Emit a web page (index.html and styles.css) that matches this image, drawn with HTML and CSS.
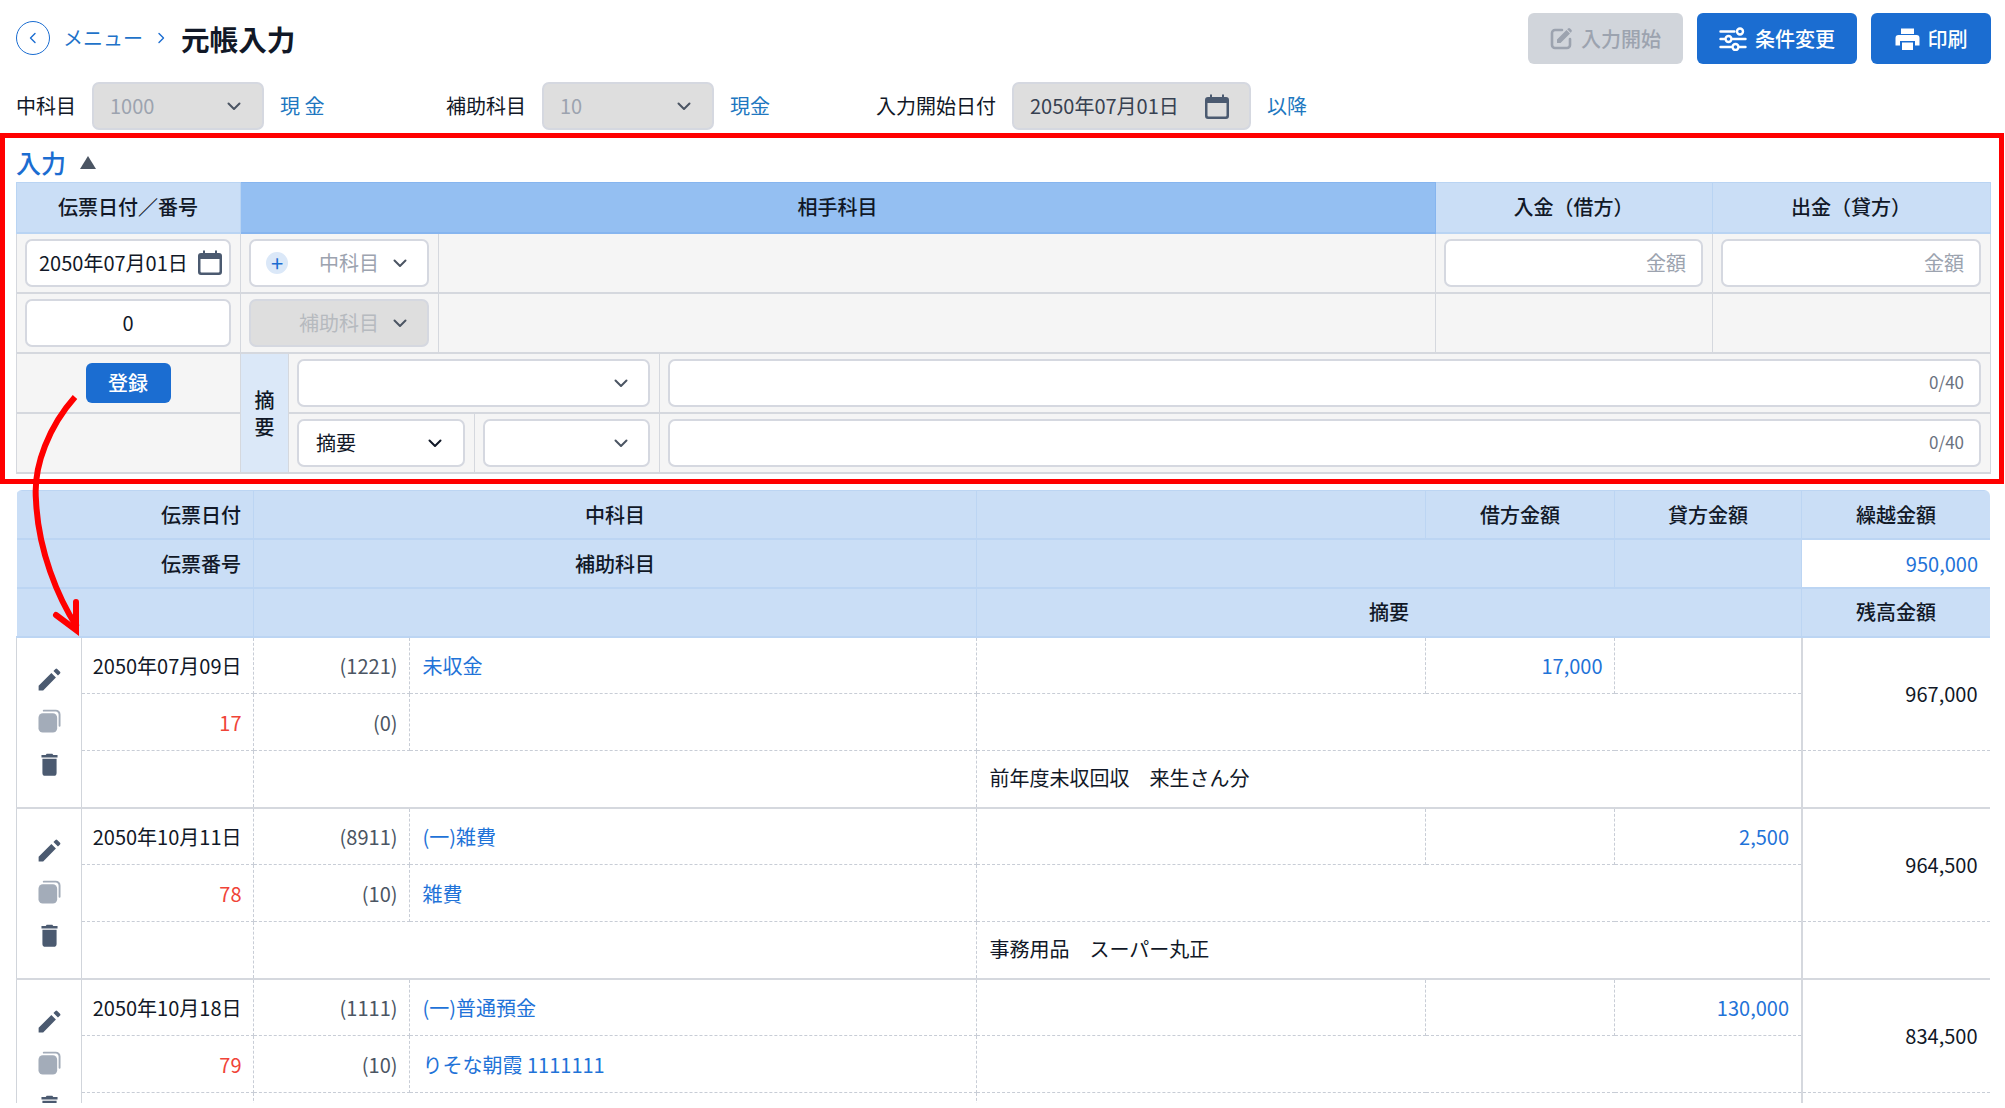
FILE: index.html
```html
<!DOCTYPE html>
<html lang="ja">

<head>
    <meta charset="UTF-8">
    <meta name="viewport" content="width=device-width, initial-scale=1.0">
    <title>元帳入力</title>
    <link rel="stylesheet" href="styles.css">
</head>

<body>
    <!-- shared icons -->
    <svg class="icon-defs" aria-hidden="true">
        <symbol id="i-chevron" viewBox="0 0 16 16">
            <path d="M2.5 5.5 8 11l5.500-5.500" fill="none" stroke="currentColor" stroke-width="2" stroke-linecap="round" stroke-linejoin="round" />
        </symbol>
        <symbol id="i-calendar" viewBox="0 0 24 25">
            <path d="M5 0.500h2v2.500h10V0.500h2V3h2a3 3 0 0 1 3 3v16a3 3 0 0 1-3 3H3a3 3 0 0 1-3-3V6a3 3 0 0 1 3-3h2zM2.500 9v12.500a1 1 0 0 0 1 1h17a1 1 0 0 0 1-1V9z" fill="currentColor" />
        </symbol>
        <symbol id="i-pencil" viewBox="0 0 24 24">
            <path d="M3 17.250V21h3.750L17.300 10.400l-3.750-3.750zM20.710 7.040a1 1 0 0 0 0-1.410l-2.340-2.340a1 1 0 0 0-1.410 0l-1.700 1.700 3.750 3.750z" fill="currentColor" />
        </symbol>
        <symbol id="i-copy" viewBox="0 0 24 24">
            <rect x="0.500" y="4" width="19.500" height="20" rx="4.500" fill="currentColor" />
            <path d="M6 1.200h12.500a4 4 0 0 1 4 4V17" fill="none" stroke="currentColor" stroke-width="2" stroke-linecap="round" />
        </symbol>
        <symbol id="i-trash" viewBox="0 0 18 24">
            <path d="M6 0.500h6l1 1.500h4.500v2.500H0.500V2H5zM1.500 6h15v15a3 3 0 0 1-3 3h-9a3 3 0 0 1-3-3z" fill="currentColor" />
        </symbol>
    </svg>

    <div class="page">
        <header class="topbar">
            <nav class="crumbs">
                <a class="back-btn" href="#">
                    <svg width="10" height="12" viewBox="0 0 10 12"><path d="M7 1.500 2.500 6 7 10.500" fill="none" stroke="currentColor" stroke-width="1.400" stroke-linecap="round" stroke-linejoin="round" /></svg>
                </a>
                <a class="crumb-link" href="#">メニュー</a>
                <svg class="crumb-sep" width="10" height="12" viewBox="0 0 10 12"><path d="M3 1.500 7.500 6 3 10.500" fill="none" stroke="currentColor" stroke-width="1.400" stroke-linecap="round" stroke-linejoin="round" /></svg>
                <h1 class="page-title">元帳入力</h1>
            </nav>
            <div class="actions">
                <button class="btn btn-off">
                    <svg width="23" height="23" viewBox="0 0 23 23">
                        <path d="M12 3H5a3 3 0 0 0-3 3v12a3 3 0 0 0 3 3h12a3 3 0 0 0 3-3v-6" fill="none" stroke="currentColor" stroke-width="2.600" stroke-linecap="round" />
                        <path d="M7 16v-3.500L16.500 3 20 6.500 10.500 16zM18 1.500a1.500 1.500 0 0 1 2.100 0l1.300 1.300a1.500 1.500 0 0 1 0 2.100l-.8.8L17.200 2.300z" fill="currentColor" />
                    </svg>
                    入力開始
                </button>
                <button class="btn btn-cond">
                    <svg width="28" height="24" viewBox="0 0 28 24" fill="none" stroke="currentColor" stroke-width="2.400" stroke-linecap="round">
                        <path d="M1.500 4.500h14M1.500 12h3.500M14 12h12.500M1.500 20h10.500M21 20h5.500" />
                        <circle cx="21" cy="4.500" r="3" /><circle cx="9.500" cy="12" r="3" /><circle cx="16.500" cy="20" r="3" />
                    </svg>
                    条件変更
                </button>
                <button class="btn btn-print">
                    <svg width="25" height="24" viewBox="0 0 25 24">
                        <path d="M6 1.500h13V7H6zM3.500 8h18a3 3 0 0 1 3 3v7.500H20V14H5v4.500H0.500V11a3 3 0 0 1 3-3zM7 15.500h11V23H7z" fill="currentColor" />
                    </svg>
                    印刷
                </button>
            </div>
        </header>

        <div class="filters">
            <div class="filter-group">
                <label>中科目</label>
                <div class="field select off filter-select"><span>1000</span><svg class="chev"><use href="#i-chevron" /></svg></div>
                <a class="filter-link" href="#">現 金</a>
            </div>
            <div class="filter-group">
                <label>補助科目</label>
                <div class="field select off filter-select"><span>10</span><svg class="chev"><use href="#i-chevron" /></svg></div>
                <a class="filter-link" href="#">現金</a>
            </div>
            <div class="filter-group">
                <label>入力開始日付</label>
                <div class="field select off filter-date"><span>2050年07月01日</span><svg class="cal"><use href="#i-calendar" /></svg></div>
                <a class="filter-link" href="#">以降</a>
            </div>
        </div>

        <!-- Entry form -->
        <section class="entry">
            <h2 class="entry-title">入力 <span class="entry-caret"></span></h2>
            <table class="entry-table">
                <colgroup>
                    <col class="c-a"><col class="c-b"><col class="c-c"><col class="c-d"><col class="c-e"><col class="c-f"><col class="c-g"><col class="c-h">
                </colgroup>
                <tr class="entry-head">
                    <th>伝票日付／番号</th>
                    <th class="strong" colspan="5">相手科目</th>
                    <th>入金（借方）</th>
                    <th>出金（貸方）</th>
                </tr>
                <tr>
                    <td>
                        <div class="field select date-input"><span>2050年07月01日</span><svg class="cal"><use href="#i-calendar" /></svg></div>
                    </td>
                    <td colspan="2">
                        <div class="field select picker">
                            <span class="plus">+</span><span class="ph">中科目</span><svg class="chev"><use href="#i-chevron" /></svg>
                        </div>
                    </td>
                    <td colspan="3"></td>
                    <td><div class="field amount">金額</div></td>
                    <td><div class="field amount">金額</div></td>
                </tr>
                <tr>
                    <td><div class="field center">0</div></td>
                    <td colspan="2">
                        <div class="field select picker off">
                            <span class="ph ph-off">補助科目</span><svg class="chev"><use href="#i-chevron" /></svg>
                        </div>
                    </td>
                    <td colspan="3"></td>
                    <td></td>
                    <td></td>
                </tr>
                <tr>
                    <td class="submit-cell"><button class="btn btn-small">登録</button></td>
                    <th class="memo-head" rowspan="2">摘<br>要</th>
                    <td colspan="3"><div class="field select plain"><svg class="chev"><use href="#i-chevron" /></svg></div></td>
                    <td colspan="3"><div class="field counter">0/40</div></td>
                </tr>
                <tr>
                    <td></td>
                    <td colspan="2">
                        <div class="field select memo-type"><span>摘要</span><svg class="chev dark"><use href="#i-chevron" /></svg></div>
                    </td>
                    <td><div class="field select plain"><svg class="chev"><use href="#i-chevron" /></svg></div></td>
                    <td colspan="3"><div class="field counter">0/40</div></td>
                </tr>
            </table>
        </section>

        <!-- Ledger -->
        <div class="ledger-wrap">
            <table class="ledger">
                <colgroup>
                    <col class="l-a"><col class="l-b"><col class="l-c"><col class="l-d"><col class="l-e"><col class="l-f"><col class="l-g"><col class="l-h">
                </colgroup>
                <thead>
                    <tr class="head-first">
                        <th class="right" colspan="2">伝票日付</th>
                        <th colspan="2">中科目</th>
                        <th></th>
                        <th>借方金額</th>
                        <th>貸方金額</th>
                        <th>繰越金額</th>
                    </tr>
                    <tr class="head-second">
                        <th class="right" colspan="2">伝票番号</th>
                        <th colspan="2">補助科目</th>
                        <th colspan="2"></th>
                        <th></th>
                        <td class="carry">950,000</td>
                    </tr>
                    <tr>
                        <th colspan="2"></th>
                        <th colspan="2"></th>
                        <th colspan="3">摘要</th>
                        <th>残高金額</th>
                    </tr>
                </thead>
                <tbody>
                    <tr class="group-start">
                        <td class="tools" rowspan="3">
                            <div class="tool-stack">
                                <svg class="tool"><use href="#i-pencil" /></svg>
                                <svg class="tool-copy"><use href="#i-copy" /></svg>
                                <svg class="tool-trash"><use href="#i-trash" /></svg>
                            </div>
                        </td>
                        <td class="right date">2050年07月09日</td>
                        <td class="right code">(1221)</td>
                        <td class="link">未収金</td>
                        <td></td>
                        <td class="right link">17,000</td>
                        <td></td>
                        <td class="right balance" rowspan="2">967,000</td>
                    </tr>
                    <tr>
                        <td class="right red">17</td>
                        <td class="right code">(0)</td>
                        <td></td>
                        <td colspan="3"></td>
                    </tr>
                    <tr class="memo-row">
                        <td></td>
                        <td colspan="2"></td>
                        <td colspan="3">前年度未収回収　来生さん分</td>
                        <td class="balance-foot"></td>
                    </tr>

                    <tr class="group-start">
                        <td class="tools" rowspan="3">
                            <div class="tool-stack">
                                <svg class="tool"><use href="#i-pencil" /></svg>
                                <svg class="tool-copy"><use href="#i-copy" /></svg>
                                <svg class="tool-trash"><use href="#i-trash" /></svg>
                            </div>
                        </td>
                        <td class="right date">2050年10月11日</td>
                        <td class="right code">(8911)</td>
                        <td class="link">(一)雑費</td>
                        <td></td>
                        <td></td>
                        <td class="right link">2,500</td>
                        <td class="right balance" rowspan="2">964,500</td>
                    </tr>
                    <tr>
                        <td class="right red">78</td>
                        <td class="right code">(10)</td>
                        <td class="link">雑費</td>
                        <td colspan="3"></td>
                    </tr>
                    <tr class="memo-row">
                        <td></td>
                        <td colspan="2"></td>
                        <td colspan="3">事務用品　スーパー丸正</td>
                        <td class="balance-foot"></td>
                    </tr>

                    <tr class="group-start">
                        <td class="tools" rowspan="3">
                            <div class="tool-stack">
                                <svg class="tool"><use href="#i-pencil" /></svg>
                                <svg class="tool-copy"><use href="#i-copy" /></svg>
                                <svg class="tool-trash"><use href="#i-trash" /></svg>
                            </div>
                        </td>
                        <td class="right date">2050年10月18日</td>
                        <td class="right code">(1111)</td>
                        <td class="link">(一)普通預金</td>
                        <td></td>
                        <td></td>
                        <td class="right link">130,000</td>
                        <td class="right balance" rowspan="2">834,500</td>
                    </tr>
                    <tr>
                        <td class="right red">79</td>
                        <td class="right code">(10)</td>
                        <td class="link">りそな朝霞 1111111</td>
                        <td colspan="3"></td>
                    </tr>
                    <tr class="memo-row">
                        <td></td>
                        <td colspan="2"></td>
                        <td colspan="3"></td>
                        <td class="balance-foot"></td>
                    </tr>
                </tbody>
            </table>
        </div>

        <!-- Annotation arrow drawn over the page -->
        <svg class="arrow" width="100" height="660" viewBox="0 0 100 660">
            <path d="M75 397C50 425 33 465 36 500C38 550 58 598 77 627" fill="none" stroke="#f00" stroke-width="6" />
            <path d="M76 602V630L56 615" fill="none" stroke="#f00" stroke-width="6" stroke-linecap="round" />
        </svg>
    </div>
</body>

</html>
```

FILE: styles.css
```css
/* Reset */
* {
    margin: 0;
    padding: 0;
    box-sizing: border-box;
}

body {
    background: #fff;
    color: #111827;
    font-family: "Noto Sans CJK JP", "Noto Sans", sans-serif;
    font-size: 20px;
    line-height: 1.3;
    overflow: hidden;
}

a {
    text-decoration: none;
}

.icon-defs {
    display: none;
}

.page {
    position: relative;
    width: 2005px;
    height: 1108px;
    overflow: hidden;
}

/* Top bar */
.topbar {
    display: flex;
    justify-content: space-between;
    align-items: center;
    padding: 13px 14px 18px 16px;
}

.crumbs {
    display: flex;
    align-items: center;
}

.back-btn {
    width: 34px;
    height: 34px;
    border: 1.500px solid #1b6dd1;
    border-radius: 50%;
    color: #1b6dd1;
    display: flex;
    align-items: center;
    justify-content: center;
    margin-right: 13px;
}

.crumb-link {
    color: #1f73c9;
    width: 81px;
}

.crumb-sep {
    color: #1b6dd1;
    margin: 0 15px 0 12px;
}

.page-title {
    font-size: 28.600px;
    font-weight: 700;
}

.actions {
    display: flex;
    gap: 14px;
}

.btn {
    height: 51px;
    display: flex;
    align-items: center;
    justify-content: center;
    gap: 8px;
    width: 155px;
    border: none;
    border-radius: 6px;
    background: #1b6dd1;
    color: #fff;
    font: inherit;
    font-weight: 500;
}

.btn-off {
    background: #d1d5db;
    color: #9ca3af;
}

.btn-cond {
    width: 160px;
}

.btn-print {
    width: 120px;
}

.btn-small {
    height: 40px;
    width: 85px;
    margin: 0 auto;
}

/* Filter row */
.filters {
    display: flex;
    height: 48px;
    padding-left: 16px;
    margin-bottom: 3px;
}

.filter-group {
    display: flex;
    align-items: center;
    gap: 16px;
    width: 430px;
}

.filter-group:last-child {
    width: auto;
}

.filter-link {
    color: #2077c0;
}

.filter-select {
    width: 172px;
    color: #9ca3af;
    padding-left: 15px;
}

.filter-date {
    width: 239px;
    color: #374151;
    padding-left: 20px;
    padding-right: 20px;
}

/* Form fields */
.field {
    height: 48px;
    display: flex;
    align-items: center;
    background: #fff;
    border: 2px solid #d5d8e0;
    border-radius: 7px;
    white-space: nowrap;
}

.field.off {
    background: #dedede;
}

.select {
    justify-content: space-between;
    padding: 0 20px 0 16px;
}

.chev {
    width: 16px;
    height: 16px;
    flex: none;
    color: #4b5563;
}

.chev.dark {
    color: #111827;
}

.cal {
    width: 24px;
    height: 25px;
    flex: none;
    color: #4b5a70;
}

.date-input {
    padding: 0 7px 0 12px;
}

.picker {
    justify-content: flex-end;
    gap: 13px;
    padding-right: 19px;
    position: relative;
}

.plus {
    position: absolute;
    left: 15px;
    top: 11px;
    width: 22px;
    height: 22px;
    border-radius: 50%;
    background: #dbe8f8;
    color: #1b6dd1;
    font-size: 22px;
    line-height: 20px;
    text-align: center;
}

.ph {
    color: #9ca3af;
}

.ph-off {
    color: #b6babf;
}

.plain {
    justify-content: flex-end;
    padding-right: 19px;
}

.memo-type {
    padding-left: 17px;
}

.center {
    justify-content: center;
}

.amount {
    justify-content: flex-end;
    padding-right: 15px;
    color: #9ca3af;
}

.counter {
    justify-content: flex-end;
    padding-right: 15px;
    color: #6b7280;
    font-size: 17px;
}

/* Entry section */
.entry {
    width: 2004px;
    height: 351px;
    border: 5px solid #f00;
    padding-left: 11px;
}

.entry-title {
    height: 44px;
    padding-top: 5px;
    display: flex;
    align-items: center;
    color: #1b6dd1;
    font-size: 25px;
    font-weight: 500;
    gap: 14px;
}

.entry-caret {
    width: 0;
    height: 0;
    border-left: 8px solid transparent;
    border-right: 8px solid transparent;
    border-bottom: 13px solid #4b5563;
}

.entry-table {
    width: 1974px;
    table-layout: fixed;
    border-collapse: collapse;
    background: #f5f5f5;
}

.c-a { width: 224px; }
.c-b { width: 48px; }
.c-c { width: 150px; }
.c-d { width: 36px; }
.c-e { width: 185px; }
.c-f { width: 776px; }
.c-g { width: 277px; }
.c-h { width: 278px; }

.entry-table td,
.entry-table th {
    border: 1px solid #d5d8de;
    border-bottom-width: 2px;
    height: 60px;
    padding: 0 9px 0 8px;
    font-weight: 400;
}

.entry-table .entry-head th {
    height: 50px;
    background: #cadef6;
    border: 1px solid #b9d4f3;
    border-bottom-width: 2px;
    font-weight: 500;
}

.entry-table .entry-head th.strong {
    background: #94bff2;
    border-color: #86b5ef;
}

.entry-table .memo-head {
    background: #dbe8f8;
    padding: 0;
    line-height: 27px;
    font-weight: 500;
}

.entry-table .submit-cell {
    vertical-align: top;
    padding-top: 9px;
}

/* Ledger */
.ledger-wrap {
    width: 1974px;
    height: 613px;
    margin: 6px 0 0 16px;
    overflow: hidden;
    border-radius: 6px 6px 0 0;
}

.ledger {
    width: 100%;
    table-layout: fixed;
    border-collapse: collapse;
}

.l-a { width: 65px; }
.l-b { width: 172px; }
.l-c { width: 156px; }
.l-d { width: 567px; }
.l-e { width: 449px; }
.l-f { width: 189px; }
.l-g { width: 187px; }
.l-h { width: 189px; }

.ledger thead th,
.ledger thead td {
    height: 49px;
    padding: 0 13px;
    background: #cadef6;
    border: 1px solid #bcd5f3;
    border-bottom-width: 2px;
    font-weight: 500;
}

.ledger thead .head-first th {
    height: 48px;
    padding-top: 2px;
}

.ledger thead .head-second th,
.ledger thead .head-second td {
    padding-top: 2px;
}

.ledger thead tr > :first-child {
    border-left: none;
}

.ledger thead .right {
    text-align: right;
    padding-right: 12px;
}

.ledger thead .carry {
    background: #fff;
    color: #1f73d8;
    font-weight: 400;
    text-align: right;
    padding-right: 12px;
}

.ledger tbody td {
    height: 57px;
    padding: 2px 12.500px 0;
    border: 1px dashed #c8cdd6;
}

.ledger tbody .right {
    padding-right: 11.500px;
}

.ledger tbody .date {
    padding-left: 0;
    white-space: nowrap;
}

.ledger tbody .memo-row td {
    padding-top: 0;
    padding-bottom: 2px;
}

.ledger .right {
    text-align: right;
}

.ledger .code {
    color: #4b5563;
}

.ledger .link {
    color: #1f73d8;
}

.ledger .red {
    color: #f04438;
}

.ledger tbody tr.group-start td {
    border-top: 2px solid #d5d8de;
}

.ledger tbody .tools {
    padding: 0;
    border-left: 1px solid #d1d5db;
    border-right: 1px solid #d1d5db;
    vertical-align: top;
}

.ledger tbody .balance {
    padding: 0 12.500px 0 0;
    border-left: 2px solid #d5d8de;
    border-right: 1px solid #d1d5db;
}

.ledger tbody .memo-row .balance-foot {
    border-left: 2px solid #d5d8de;
    border-right: 1px solid #d1d5db;
}

.tool-stack {
    display: flex;
    flex-direction: column;
    align-items: center;
    padding-top: 27px;
}

.tool {
    width: 29px;
    height: 29px;
    color: #4b5a70;
}

.tool-copy {
    width: 23px;
    height: 24px;
    margin-top: 15px;
    color: #a3acb9;
}

.tool-trash {
    width: 17px;
    height: 23px;
    margin-top: 20px;
    color: #4b5a70;
}

/* Annotation */
.arrow {
    position: absolute;
    top: 0;
    left: 0;
}
```
